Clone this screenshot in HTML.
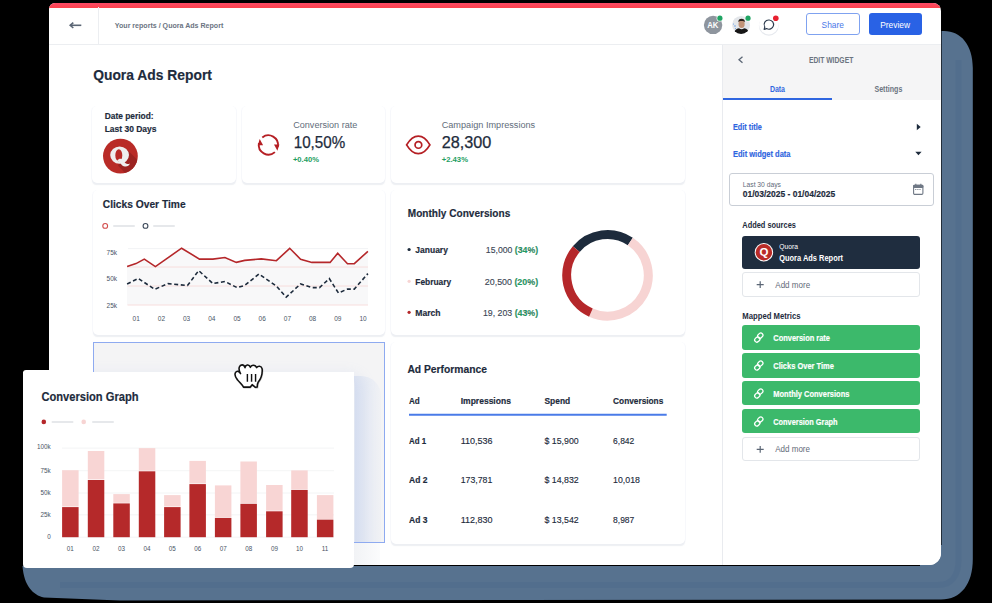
<!DOCTYPE html>
<html><head><meta charset="utf-8">
<style>
*{margin:0;padding:0;box-sizing:border-box}
html,body{width:992px;height:603px;overflow:hidden;background:#000;font-family:"Liberation Sans",sans-serif}
.a{position:absolute}
svg{position:absolute;left:0;top:0;overflow:visible}
svg text{font-family:"Liberation Sans",sans-serif}
.card{position:absolute;background:#fff;border-radius:5px;box-shadow:0 2px 1px -0.5px rgba(220,224,232,.5),1px 0 0 rgba(225,228,245,.2),-1px 0 0 rgba(225,228,245,.2)}
</style></head>
<body>
<svg width="992" height="603"><path d="M941.6 31L944 31C961 31 972.8 45 972.8 68L972.8 559C972.8 584 961 599.5 941 599.5L120 600.5L44 597.5C33 595 24 586 22.5 566L941.6 566Z" fill="#57728f"/><rect x="920" y="545" width="22" height="21" fill="#57728f"/>
<path d="M958.5 60L958.5 560C958.5 575 952 585 938 585L60 585" fill="none" stroke="#4e6a8b" stroke-width="6" opacity="0.45"/></svg>
<div class="a" style="left:49px;top:3px;width:892px;height:562px;background:#fff;border-radius:6px 8px 12px 6px;overflow:hidden">
  <div class="a" style="left:0;top:0;width:893px;height:4.5px;background:linear-gradient(#fd4a66,#fe424c)"></div>
</div>
<div class="a" style="left:49px;top:44px;width:892px;height:1px;background:#eceef1"></div>
<div class="a" style="left:98px;top:7px;width:1px;height:37px;background:#eceef1"></div>

<svg width="992" height="603">
<circle cx="713.1" cy="24.9" r="9.2" fill="#8e959e"/>
<text x="707.2" y="28.2" font-size="8.6" font-weight="700" fill="#fff" textLength="11.2" lengthAdjust="spacingAndGlyphs">AK</text>
<circle cx="719.9" cy="18.2" r="3.3" fill="#fff"/><circle cx="719.9" cy="18.2" r="2.6" fill="#1fa463"/>
<defs><clipPath id="av"><circle cx="741.1" cy="24.9" r="9"/></clipPath></defs>
<g clip-path="url(#av)">
<rect x="731" y="15" width="20" height="20" fill="#e3e6ea"/>
<circle cx="735" cy="26" r="0.8" fill="#6aa0e8"/><circle cx="733.5" cy="24" r="0.6" fill="#6aa0e8"/><circle cx="735.5" cy="28.5" r="0.6" fill="#6aa0e8"/>
<ellipse cx="741.6" cy="24" rx="3.1" ry="4.1" fill="#c29478"/>
<path d="M738.3 22.3c0-2.6 1.3-3.5 3.3-3.5s3.3 .9 3.3 3.5c-.6-1-1.5-1.4-3.3-1.4s-2.7.4-3.3 1.4z" fill="#2a211c"/>
<path d="M733.5 35c.3-4 2.5-6.6 5.5-6.8 1 .7 1.8 1 2.6 1s1.6-.3 2.6-1c3 .2 5.2 2.8 5.5 6.8z" fill="#161616"/>
</g>
<circle cx="748" cy="18.2" r="3.3" fill="#fff"/><circle cx="748" cy="18.2" r="2.6" fill="#1fa463"/>
<circle cx="768.8" cy="25.8" r="9.9" fill="#e6e9ee"/>
<circle cx="768.8" cy="24.7" r="9.7" fill="#fff"/>
<path d="M769.2 20a4.7 4.6 0 1 1-2.6 8.6l-2.5 0.8.7-2.4A4.7 4.6 0 0 1 769.2 20z" fill="none" stroke="#2d3b4e" stroke-width="1.15" stroke-linejoin="round"/>
<circle cx="775.8" cy="18.2" r="2.8" fill="#e8202f"/>
</svg>
<div class="a" style="left:806.3px;top:13.3px;width:53.3px;height:21.9px;border:1px solid #7fa2f0;border-radius:3px"></div>
<div class="a" style="left:868.8px;top:13.3px;width:52.8px;height:21.9px;background:#2962e5;border-radius:3px"></div>

<div class="card" style="left:92px;top:106px;width:144px;height:77px"></div>
<div class="card" style="left:242px;top:106px;width:143px;height:77px"></div>
<div class="card" style="left:391px;top:106px;width:294px;height:77px"></div>
<div class="card" style="left:93px;top:190px;width:292px;height:145px"></div>
<div class="card" style="left:391px;top:190px;width:294px;height:145px"></div>
<div class="a" style="left:93px;top:342px;width:292px;height:201px;background:#f4f4f5;border:1px solid #8eaaf0;overflow:hidden"><div class="a" style="left:-70px;top:29.4px;width:331px;height:196px;border-radius:0 14px 0 0;box-shadow:8px 2px 14px 0px rgba(150,175,235,.16)"></div></div>
<div class="card" style="left:391px;top:342px;width:294px;height:202px"></div>

<div class="a" style="left:722px;top:45px;width:219px;height:520px;background:#fff;border-left:1px solid #e9ebef;border-radius:0 0 12px 0"></div>
<div class="a" style="left:723px;top:45px;width:218px;height:55px;background:#f5f5f6"></div>
<div class="a" style="left:723px;top:98px;width:108.6px;height:2px;background:#2f66e0"></div>
<div class="a" style="left:729.3px;top:173.1px;width:204.4px;height:32.9px;border:1px solid #c9ced6;border-radius:3px"></div>
<div class="a" style="left:741.9px;top:235.6px;width:177.9px;height:33.1px;background:#1f2d3f;border-radius:3px"></div>
<div class="a" style="left:741.9px;top:272.4px;width:177.9px;height:24.2px;border:1px solid #e3e6ea;border-radius:3px"></div>
<div class="a" style="left:742px;top:325.00px;width:178px;height:24.6px;background:#3cb96b;border-radius:3px"></div><div class="a" style="left:742px;top:352.95px;width:178px;height:24.6px;background:#3cb96b;border-radius:3px"></div><div class="a" style="left:742px;top:380.90px;width:178px;height:24.6px;background:#3cb96b;border-radius:3px"></div><div class="a" style="left:742px;top:408.85px;width:178px;height:24.6px;background:#3cb96b;border-radius:3px"></div>
<div class="a" style="left:741.9px;top:437.1px;width:177.9px;height:24.3px;border:1px solid #e3e6ea;border-radius:3px"></div>

<svg width="992" height="603" viewBox="0 0 992 603">

  <circle cx="105.2" cy="225.9" r="2.4" fill="none" stroke="#d24b4b" stroke-width="1.1"/>
  <line x1="114" y1="225.9" x2="134" y2="225.9" stroke="#e6e8eb" stroke-width="2" stroke-linecap="round"/>
  <circle cx="145.5" cy="225.9" r="2.4" fill="none" stroke="#3b4859" stroke-width="1.1"/>
  <line x1="154" y1="225.9" x2="174" y2="225.9" stroke="#e6e8eb" stroke-width="2" stroke-linecap="round"/>
  <polygon points="127.1,266.6 136.0,263.6 144.3,259.1 155.4,266.6 181.6,248.2 199.5,259.1 212.9,259.1 224.9,257.5 236.3,262.4 244.7,260.4 261.3,258.9 276.4,260.7 289.7,248.3 300.6,259.2 311.9,262.4 330.1,262.4 337.7,253.3 347.5,263.7 354.3,263.7 367.9,251.3 367.9,305 127.1,305" fill="#f8f8f9"/>
  <line x1="128" y1="248.6" x2="368" y2="248.6" stroke="#eeeff1" stroke-width="0.8"/>
  <line x1="127.5" y1="267" x2="368" y2="267" stroke="#f6d6d6" stroke-width="0.8"/>
  <line x1="127.5" y1="286" x2="368" y2="286" stroke="#f6d6d6" stroke-width="0.8"/>
  <line x1="127.5" y1="305" x2="368" y2="305" stroke="#f6d6d6" stroke-width="0.8"/>
  <polyline points="127.1,266.6 136.0,263.6 144.3,259.1 155.4,266.6 181.6,248.2 199.5,259.1 212.9,259.1 224.9,257.5 236.3,262.4 244.7,260.4 261.3,258.9 276.4,260.7 289.7,248.3 300.6,259.2 311.9,262.4 330.1,262.4 337.7,253.3 347.5,263.7 354.3,263.7 367.9,251.3" fill="none" stroke="#b5272a" stroke-width="1.6"/>
  <polyline points="127.1,284.0 138.3,278.5 154.7,289.3 168.1,283.6 187.5,285.5 198.7,270.6 212.9,283.6 224.9,281.5 237.1,287.6 244.7,285.4 259.0,274.0 276.4,286.1 286.2,297.2 300.6,283.9 311.9,287.6 319.5,287.6 329.3,278.6 338.4,292.9 347.5,289.1 354.3,289.1 367.9,273.6" fill="none" stroke="#1d2b3c" stroke-width="1.6" stroke-dasharray="4 2.6"/>
  <g font-size="6.5" fill="#4a5565" text-anchor="end"><text x="117" y="254.5">75k</text><text x="117" y="281">50k</text><text x="117" y="307.5">25k</text></g>
  <g font-size="6.5" fill="#4a5565" text-anchor="middle"><text x="136.2" y="320.5">01</text><text x="161.4" y="320.5">02</text><text x="186.6" y="320.5">03</text><text x="211.8" y="320.5">04</text><text x="237.0" y="320.5">05</text><text x="262.2" y="320.5">06</text><text x="287.4" y="320.5">07</text><text x="312.6" y="320.5">08</text><text x="337.8" y="320.5">09</text><text x="363.0" y="320.5">10</text></g>


  <circle cx="409.1" cy="249.5" r="1.6" fill="#1d2b3c"/>
  <circle cx="409.1" cy="281.3" r="1.6" fill="#f7d4d3"/>
  <circle cx="409.1" cy="312.3" r="1.6" fill="#b5272a"/>
  <path d="M576.25 249.07A40.8 40.8 0 0 1 630.32 241.48" fill="none" stroke="#1d2b3c" stroke-width="9"/><path d="M630.32 241.48A40.8 40.8 0 0 1 590.91 312.57" fill="none" stroke="#f7d4d3" stroke-width="9"/><path d="M590.91 312.57A40.8 40.8 0 0 1 576.25 249.07" fill="none" stroke="#b5272a" stroke-width="9"/>

<line x1="409" y1="414.8" x2="666.7" y2="414.8" stroke="#4a7be8" stroke-width="2"/>

<path d="M70.5 25.3h10.8" stroke="#5b6675" stroke-width="1.6"/><path d="M73.3 22.6L70.2 25.3l3.1 2.7" fill="none" stroke="#5b6675" stroke-width="1.6"/>
<defs><clipPath id="qc"><circle cx="120.4" cy="156.1" r="17.4"/></clipPath></defs>
<circle cx="120.4" cy="156.1" r="17.4" fill="#b92b27"/>
<path d="M127.5 150 L150 172.5 L141 190 L118 165.5z" fill="#9c2321" clip-path="url(#qc)"/>
<path d="M110.2 155.1a9.4 8.7 0 1 0 18.8 0a9.4 8.7 0 1 0 -18.8 0zM115.3 155.3a3.5 6.1 0 1 0 7 0a3.5 6.1 0 1 0 -7 0z" fill="#eeeeee" fill-rule="evenodd"/>
<path d="M117.3 160.6C118.9 158.6 121 158.3 122.6 159.9L125.6 163.2C126.6 164.2 128.2 164.3 130 163.5C129.2 165.8 127.1 166.8 124.9 166.5C123.1 166.2 122 165.3 121 163.9L120 162.4C119.3 161.5 118.4 161.3 117.3 161.8Z" fill="#eeeeee"/>
<g fill="none" stroke="#b51f24" stroke-width="1.9">
  <path d="M262.3 137.4A9.7 9.7 0 0 1 277.9 146.5"/>
  <path d="M274.9 152.1A9.7 9.7 0 0 1 258.9 143.2"/>
</g>
<path d="M274 144.4h5.4l-2 6.3z" fill="#b51f24"/>
<path d="M257.8 145.2h5.3l-3.4-6.1z" fill="#b51f24"/>
<path d="M406.6 144.9C410 139.2 414 136.1 418.3 136.1S426.6 139.2 429.9 144.9C426.6 150.6 422.6 153.7 418.3 153.7S410 150.6 406.6 144.9z" fill="none" stroke="#b51f24" stroke-width="1.8"/>
<circle cx="418.4" cy="144.9" r="3.35" fill="none" stroke="#b51f24" stroke-width="1.7"/>
<path d="M742.5 56.7L739 59.7l3.5 3" fill="none" stroke="#5b6675" stroke-width="1.3"/>
<path d="M916.8 123.7L920.7 127l-3.9 3.3z" fill="#1d2b3c"/>
<path d="M915.3 151.8h6.3l-3.15 3.5z" fill="#1d2b3c"/>
<g transform="translate(912,183)"><rect x="1.6" y="2.3" width="9.3" height="9.1" rx="1.2" fill="none" stroke="#6f7885" stroke-width="1.1"/><rect x="1.1" y="1.8" width="10.3" height="3.2" rx="1.2" fill="#6f7885"/><line x1="3.8" y1="0.8" x2="3.8" y2="2.5" stroke="#6f7885" stroke-width="1.1"/><line x1="8.8" y1="0.8" x2="8.8" y2="2.5" stroke="#6f7885" stroke-width="1.1"/><line x1="3.2" y1="6.5" x2="9.2" y2="6.5" stroke="#6f7885" stroke-width="0.9" stroke-dasharray="1.2 0.9"/></g>
<g transform="translate(754.7,243.1)"><circle cx="9.2" cy="9.2" r="9.2" fill="#fff"/><circle cx="9.2" cy="9.2" r="8.2" fill="#b92b27"/>
<text x="9.2" y="13.3" text-anchor="middle" font-family="Liberation Serif" font-weight="700" font-size="11.5" fill="#fff">Q</text></g>
<path d="M760.2 281.2v6.9M756.7 284.65h7" stroke="#5b6675" stroke-width="1.2"/>
<path d="M760.2 445.9v6.9M756.7 449.35h7" stroke="#5b6675" stroke-width="1.2"/>
<g transform="translate(758.8,337.60) rotate(-42)" fill="none" stroke="#fff" stroke-width="1.25"><rect x="-0.4" y="-2.6" width="5.6" height="4.3" rx="2.15"/><rect x="-5.2" y="-1.7" width="5.6" height="4.3" rx="2.15"/></g><g transform="translate(758.8,365.55) rotate(-42)" fill="none" stroke="#fff" stroke-width="1.25"><rect x="-0.4" y="-2.6" width="5.6" height="4.3" rx="2.15"/><rect x="-5.2" y="-1.7" width="5.6" height="4.3" rx="2.15"/></g><g transform="translate(758.8,393.50) rotate(-42)" fill="none" stroke="#fff" stroke-width="1.25"><rect x="-0.4" y="-2.6" width="5.6" height="4.3" rx="2.15"/><rect x="-5.2" y="-1.7" width="5.6" height="4.3" rx="2.15"/></g><g transform="translate(758.8,421.45) rotate(-42)" fill="none" stroke="#fff" stroke-width="1.25"><rect x="-0.4" y="-2.6" width="5.6" height="4.3" rx="2.15"/><rect x="-5.2" y="-1.7" width="5.6" height="4.3" rx="2.15"/></g>
<text x="114.8" y="27.7" font-size="7.4" font-weight="700" fill="#6b7482" text-anchor="start" textLength="108.5" lengthAdjust="spacingAndGlyphs">Your reports / Quora Ads Report</text>
<text x="821.6" y="27.7" font-size="9.6" font-weight="400" fill="#4a78e8" text-anchor="start" textLength="22.3" lengthAdjust="spacingAndGlyphs">Share</text>
<text x="880.2" y="27.7" font-size="9.6" font-weight="400" fill="#fff" text-anchor="start" textLength="29.9" lengthAdjust="spacingAndGlyphs">Preview</text>
<text x="93.2" y="79.7" font-size="14.8" font-weight="700" fill="#1d2b3c" text-anchor="start" textLength="118.7" lengthAdjust="spacingAndGlyphs" stroke="#1d2b3c" stroke-width="0.18">Quora Ads Report</text>
<text x="104.7" y="118.9" font-size="9.2" font-weight="700" fill="#1d2b3c" text-anchor="start" textLength="48.9" lengthAdjust="spacingAndGlyphs" stroke="#1d2b3c" stroke-width="0.18">Date period:</text>
<text x="104.7" y="131.6" font-size="9.2" font-weight="700" fill="#1d2b3c" text-anchor="start" textLength="51.8" lengthAdjust="spacingAndGlyphs" stroke="#1d2b3c" stroke-width="0.18">Last 30 Days</text>
<text x="293.2" y="128.2" font-size="8.3" font-weight="400" fill="#616c7a" text-anchor="start" textLength="64.1" lengthAdjust="spacingAndGlyphs">Conversion rate</text>
<text x="293.7" y="148.1" font-size="15.8" font-weight="400" fill="#1d2b3c" text-anchor="start" textLength="51.5" lengthAdjust="spacingAndGlyphs" stroke="#1d2b3c" stroke-width="0.25">10,50%</text>
<text x="292.9" y="161.8" font-size="7.8" font-weight="700" fill="#1e9e62" text-anchor="start" textLength="26.1" lengthAdjust="spacingAndGlyphs">+0.40%</text>
<text x="441.7" y="128.2" font-size="8.3" font-weight="400" fill="#616c7a" text-anchor="start" textLength="93.5" lengthAdjust="spacingAndGlyphs">Campaign Impressions</text>
<text x="441.7" y="148.1" font-size="15.8" font-weight="400" fill="#1d2b3c" text-anchor="start" textLength="49.7" lengthAdjust="spacingAndGlyphs" stroke="#1d2b3c" stroke-width="0.25">28,300</text>
<text x="441.7" y="161.8" font-size="7.8" font-weight="700" fill="#1e9e62" text-anchor="start" textLength="26.3" lengthAdjust="spacingAndGlyphs">+2.43%</text>
<text x="102.8" y="208.1" font-size="11.6" font-weight="700" fill="#1d2b3c" text-anchor="start" textLength="82.8" lengthAdjust="spacingAndGlyphs" stroke="#1d2b3c" stroke-width="0.18">Clicks Over Time</text>
<text x="407.8" y="217.2" font-size="11.6" font-weight="700" fill="#1d2b3c" text-anchor="start" textLength="102.5" lengthAdjust="spacingAndGlyphs" stroke="#1d2b3c" stroke-width="0.18">Monthly Conversions</text>
<text x="415.3" y="252.9" font-size="9.8" font-weight="700" fill="#1d2b3c" text-anchor="start" textLength="32.6" lengthAdjust="spacingAndGlyphs" stroke="#1d2b3c" stroke-width="0.18">January</text>
<text x="415.3" y="284.6" font-size="9.8" font-weight="700" fill="#1d2b3c" text-anchor="start" textLength="35.9" lengthAdjust="spacingAndGlyphs" stroke="#1d2b3c" stroke-width="0.18">February</text>
<text x="415.3" y="315.7" font-size="9.8" font-weight="700" fill="#1d2b3c" text-anchor="start" textLength="25.3" lengthAdjust="spacingAndGlyphs" stroke="#1d2b3c" stroke-width="0.18">March</text>
<text x="538.1" y="252.9" font-size="9.8" font-weight="400" fill="#3c4756" text-anchor="end" textLength="52.3" lengthAdjust="spacingAndGlyphs" stroke="#3c4756" stroke-width="0.14">15,000 <tspan font-weight="700" fill="#1e9e62">(34%)</tspan></text>
<text x="538.1" y="284.6" font-size="9.8" font-weight="400" fill="#3c4756" text-anchor="end" textLength="53.3" lengthAdjust="spacingAndGlyphs" stroke="#3c4756" stroke-width="0.14">20,500 <tspan font-weight="700" fill="#1e9e62">(20%)</tspan></text>
<text x="538.1" y="315.7" font-size="9.8" font-weight="400" fill="#3c4756" text-anchor="end" textLength="55.2" lengthAdjust="spacingAndGlyphs" stroke="#3c4756" stroke-width="0.14">19, 203 <tspan font-weight="700" fill="#1e9e62">(43%)</tspan></text>
<text x="407.4" y="373.4" font-size="11.6" font-weight="700" fill="#1d2b3c" text-anchor="start" textLength="79.5" lengthAdjust="spacingAndGlyphs" stroke="#1d2b3c" stroke-width="0.18">Ad Performance</text>
<text x="409" y="404.1" font-size="9.6" font-weight="700" fill="#1d2b3c" text-anchor="start" textLength="10.8" lengthAdjust="spacingAndGlyphs" stroke="#1d2b3c" stroke-width="0.18">Ad</text>
<text x="460.7" y="404.1" font-size="9.6" font-weight="700" fill="#1d2b3c" text-anchor="start" textLength="50.2" lengthAdjust="spacingAndGlyphs" stroke="#1d2b3c" stroke-width="0.18">Impressions</text>
<text x="544.5" y="404.1" font-size="9.6" font-weight="700" fill="#1d2b3c" text-anchor="start" textLength="25.7" lengthAdjust="spacingAndGlyphs" stroke="#1d2b3c" stroke-width="0.18">Spend</text>
<text x="613.1" y="404.1" font-size="9.6" font-weight="700" fill="#1d2b3c" text-anchor="start" textLength="50.2" lengthAdjust="spacingAndGlyphs" stroke="#1d2b3c" stroke-width="0.18">Conversions</text>
<text x="409" y="444.2" font-size="9.6" font-weight="700" fill="#1d2b3c" text-anchor="start" textLength="17.2" lengthAdjust="spacingAndGlyphs" stroke="#1d2b3c" stroke-width="0.18">Ad 1</text>
<text x="460.7" y="444.2" font-size="9.6" font-weight="400" fill="#1d2b3c" text-anchor="start" textLength="31.9" lengthAdjust="spacingAndGlyphs" stroke="#1d2b3c" stroke-width="0.14">110,536</text>
<text x="544.5" y="444.2" font-size="9.6" font-weight="400" fill="#1d2b3c" text-anchor="start" textLength="34.2" lengthAdjust="spacingAndGlyphs" stroke="#1d2b3c" stroke-width="0.14">$ 15,900</text>
<text x="613.1" y="444.2" font-size="9.6" font-weight="400" fill="#1d2b3c" text-anchor="start" textLength="21.2" lengthAdjust="spacingAndGlyphs" stroke="#1d2b3c" stroke-width="0.14">6,842</text>
<text x="409" y="482.9" font-size="9.6" font-weight="700" fill="#1d2b3c" text-anchor="start" textLength="18.4" lengthAdjust="spacingAndGlyphs" stroke="#1d2b3c" stroke-width="0.18">Ad 2</text>
<text x="460.7" y="482.9" font-size="9.6" font-weight="400" fill="#1d2b3c" text-anchor="start" textLength="31.6" lengthAdjust="spacingAndGlyphs" stroke="#1d2b3c" stroke-width="0.14">173,781</text>
<text x="544.5" y="482.9" font-size="9.6" font-weight="400" fill="#1d2b3c" text-anchor="start" textLength="34.2" lengthAdjust="spacingAndGlyphs" stroke="#1d2b3c" stroke-width="0.14">$ 14,832</text>
<text x="613.1" y="482.9" font-size="9.6" font-weight="400" fill="#1d2b3c" text-anchor="start" textLength="26.8" lengthAdjust="spacingAndGlyphs" stroke="#1d2b3c" stroke-width="0.14">10,018</text>
<text x="409" y="522.5" font-size="9.6" font-weight="700" fill="#1d2b3c" text-anchor="start" textLength="18.4" lengthAdjust="spacingAndGlyphs" stroke="#1d2b3c" stroke-width="0.18">Ad 3</text>
<text x="460.7" y="522.5" font-size="9.6" font-weight="400" fill="#1d2b3c" text-anchor="start" textLength="31.9" lengthAdjust="spacingAndGlyphs" stroke="#1d2b3c" stroke-width="0.14">112,830</text>
<text x="544.5" y="522.5" font-size="9.6" font-weight="400" fill="#1d2b3c" text-anchor="start" textLength="34.2" lengthAdjust="spacingAndGlyphs" stroke="#1d2b3c" stroke-width="0.14">$ 13,542</text>
<text x="613.1" y="522.5" font-size="9.6" font-weight="400" fill="#1d2b3c" text-anchor="start" textLength="21.2" lengthAdjust="spacingAndGlyphs" stroke="#1d2b3c" stroke-width="0.14">8,987</text>
<text x="831.1" y="62.7" font-size="8.6" font-weight="700" fill="#6b7480" text-anchor="middle" textLength="44.4" lengthAdjust="spacingAndGlyphs">EDIT WIDGET</text>
<text x="769.9" y="92.4" font-size="8.5" font-weight="700" fill="#2f66e0" text-anchor="start" textLength="15.1" lengthAdjust="spacingAndGlyphs">Data</text>
<text x="874.5" y="92.4" font-size="8.5" font-weight="700" fill="#6b7480" text-anchor="start" textLength="27.8" lengthAdjust="spacingAndGlyphs">Settings</text>
<text x="733" y="130.2" font-size="9.2" font-weight="700" fill="#2f66e0" text-anchor="start" textLength="28.8" lengthAdjust="spacingAndGlyphs" stroke="#2f66e0" stroke-width="0.18">Edit title</text>
<text x="733" y="156.6" font-size="9.2" font-weight="700" fill="#2f66e0" text-anchor="start" textLength="57.5" lengthAdjust="spacingAndGlyphs" stroke="#2f66e0" stroke-width="0.18">Edit widget data</text>
<text x="742.8" y="186.5" font-size="6.6" font-weight="400" fill="#5f6a78" text-anchor="start" textLength="38.1" lengthAdjust="spacingAndGlyphs">Last 30 days</text>
<text x="742.8" y="196.9" font-size="9.8" font-weight="700" fill="#1d2b3c" text-anchor="start" textLength="92.3" lengthAdjust="spacingAndGlyphs" stroke="#1d2b3c" stroke-width="0.18">01/03/2025 - 01/04/2025</text>
<text x="742.3" y="228.4" font-size="8.3" font-weight="700" fill="#1d2b3c" text-anchor="start" textLength="53.6" lengthAdjust="spacingAndGlyphs">Added sources</text>
<text x="779.2" y="249.4" font-size="6.6" font-weight="400" fill="#fff" text-anchor="start" textLength="18.7" lengthAdjust="spacingAndGlyphs">Quora</text>
<text x="779.2" y="260.6" font-size="8.8" font-weight="700" fill="#fff" text-anchor="start" textLength="63.9" lengthAdjust="spacingAndGlyphs">Quora Ads Report</text>
<text x="775.3" y="287.7" font-size="8.8" font-weight="400" fill="#5f6a78" text-anchor="start" textLength="34.8" lengthAdjust="spacingAndGlyphs">Add more</text>
<text x="742.3" y="318.8" font-size="8.3" font-weight="700" fill="#1d2b3c" text-anchor="start" textLength="58.2" lengthAdjust="spacingAndGlyphs">Mapped Metrics</text>
<text x="773.3" y="340.8" font-size="9.2" font-weight="700" fill="#fff" text-anchor="start" textLength="56.7" lengthAdjust="spacingAndGlyphs" stroke="#fff" stroke-width="0.18">Conversion rate</text>
<text x="773.3" y="368.75" font-size="9.2" font-weight="700" fill="#fff" text-anchor="start" textLength="60.6" lengthAdjust="spacingAndGlyphs" stroke="#fff" stroke-width="0.18">Clicks Over Time</text>
<text x="773.3" y="396.7" font-size="9.2" font-weight="700" fill="#fff" text-anchor="start" textLength="76.1" lengthAdjust="spacingAndGlyphs" stroke="#fff" stroke-width="0.18">Monthly Conversions</text>
<text x="773.3" y="424.65" font-size="9.2" font-weight="700" fill="#fff" text-anchor="start" textLength="64.2" lengthAdjust="spacingAndGlyphs" stroke="#fff" stroke-width="0.18">Conversion Graph</text>
<text x="775.2" y="452.3" font-size="8.8" font-weight="400" fill="#5f6a78" text-anchor="start" textLength="34.8" lengthAdjust="spacingAndGlyphs">Add more</text>
</svg>

<div class="a" style="left:354px;top:376px;width:27px;height:166px;border-radius:0 20px 0 0;background:linear-gradient(to right,rgba(130,160,220,.17),rgba(150,180,235,.12) 55%,rgba(170,195,240,.05))"></div>
<div class="a" style="left:354px;top:543px;width:26px;height:22px;background:linear-gradient(to right,rgba(60,80,120,.07),rgba(60,80,120,.02))"></div>
<div class="a" style="left:23px;top:370.2px;width:26px;height:4px;background:#fff;border-radius:3px 0 0 0"></div>
<div class="a" style="left:23px;top:372.4px;width:331.2px;height:195.9px;background:#fff;border-radius:0 0 4px 4px"></div>
<svg width="992" height="603" viewBox="0 0 992 603">

  <circle cx="43.8" cy="421.9" r="2.3" fill="#b5272a"/>
  <line x1="52.5" y1="421.9" x2="72.5" y2="421.9" stroke="#e6e8eb" stroke-width="2" stroke-linecap="round"/>
  <circle cx="83.7" cy="421.9" r="2.3" fill="#f7d4d3"/>
  <line x1="93" y1="421.9" x2="113" y2="421.9" stroke="#e6e8eb" stroke-width="2" stroke-linecap="round"/>
  <g stroke="#f0f1f3" stroke-width="0.8">
    <line x1="62" y1="448.1" x2="334" y2="448.1"/><line x1="62" y1="470.7" x2="334" y2="470.7"/><line x1="62" y1="493" x2="334" y2="493"/><line x1="62" y1="514.8" x2="334" y2="514.8"/><line x1="62" y1="537.2" x2="334" y2="537.2"/>
  </g>
  <rect x="62.1" y="470.2" width="16.5" height="36.3" fill="#f8d5d4"/><rect x="62.1" y="507.1" width="16.5" height="30.1" fill="#b5292a"/><rect x="87.8" y="451.0" width="16.5" height="28.4" fill="#f8d5d4"/><rect x="87.8" y="480.0" width="16.5" height="57.2" fill="#b5292a"/><rect x="113.3" y="494.1" width="16.5" height="8.7" fill="#f8d5d4"/><rect x="113.3" y="503.4" width="16.5" height="33.8" fill="#b5292a"/><rect x="138.8" y="448.1" width="16.5" height="22.6" fill="#f8d5d4"/><rect x="138.8" y="471.3" width="16.5" height="65.9" fill="#b5292a"/><rect x="164.1" y="495.1" width="16.5" height="11.4" fill="#f8d5d4"/><rect x="164.1" y="507.1" width="16.5" height="30.1" fill="#b5292a"/><rect x="189.4" y="460.9" width="16.5" height="22.6" fill="#f8d5d4"/><rect x="189.4" y="484.1" width="16.5" height="53.1" fill="#b5292a"/><rect x="214.9" y="485.4" width="16.5" height="31.9" fill="#f8d5d4"/><rect x="214.9" y="517.9" width="16.5" height="19.3" fill="#b5292a"/><rect x="240.4" y="461.5" width="16.5" height="41.7" fill="#f8d5d4"/><rect x="240.4" y="503.8" width="16.5" height="33.4" fill="#b5292a"/><rect x="266.1" y="485.0" width="16.5" height="25.7" fill="#f8d5d4"/><rect x="266.1" y="511.3" width="16.5" height="25.9" fill="#b5292a"/><rect x="291.2" y="470.4" width="16.5" height="18.9" fill="#f8d5d4"/><rect x="291.2" y="489.9" width="16.5" height="47.3" fill="#b5292a"/><rect x="316.9" y="495.1" width="16.5" height="23.9" fill="#f8d5d4"/><rect x="316.9" y="519.6" width="16.5" height="17.6" fill="#b5292a"/>
  <g font-size="6.3" fill="#4a5565" text-anchor="end">
    <text x="50.7" y="448.6">100k</text><text x="50.7" y="472.7">75k</text><text x="50.7" y="495">50k</text><text x="50.7" y="516.8">25k</text><text x="50.7" y="539.2">0</text>
  </g>
  <g font-size="6.3" fill="#4a5565" text-anchor="middle"><text x="70.3" y="551.3">01</text><text x="96.0" y="551.3">02</text><text x="121.5" y="551.3">03</text><text x="147.1" y="551.3">04</text><text x="172.3" y="551.3">05</text><text x="197.7" y="551.3">06</text><text x="223.2" y="551.3">07</text><text x="248.7" y="551.3">08</text><text x="274.4" y="551.3">09</text><text x="299.4" y="551.3">10</text><text x="325.1" y="551.3">11</text></g>

<text x="41.5" y="401" font-size="12" font-weight="700" fill="#1d2b3c" text-anchor="start" textLength="97" lengthAdjust="spacingAndGlyphs" stroke="#1d2b3c" stroke-width="0.18">Conversion Graph</text>
<g transform="translate(228,356) scale(0.05967)">
<path d="M210 295 C190 260 180 215 190 185 C205 140 265 130 285 195 C290 150 350 125 375 190 C385 150 450 135 480 195 C500 165 560 160 572 215 C580 300 560 370 505 440 C490 465 490 495 490 520 L460 525 L405 480 L370 522 L260 522 C240 480 200 450 160 400 C125 360 105 320 125 280 C145 245 190 250 210 295z" fill="#fff" stroke="#111" stroke-width="26" stroke-linejoin="round" transform="translate(6,10)" opacity="0.25"/>
<path d="M210 295 C190 260 180 215 190 185 C205 140 265 130 285 195 C290 150 350 125 375 190 C385 150 450 135 480 195 C500 165 560 160 572 215 C580 300 560 370 505 440 C490 465 490 495 490 520 L460 525 L405 480 L370 522 L260 522 C240 480 200 450 160 400 C125 360 105 320 125 280 C145 245 190 250 210 295z" fill="#fff" stroke="#111" stroke-width="26" stroke-linejoin="round"/>
<path d="M325 300V430M395 300V430M462 300V430" stroke="#111" stroke-width="24"/></g>
</svg>
</body></html>
